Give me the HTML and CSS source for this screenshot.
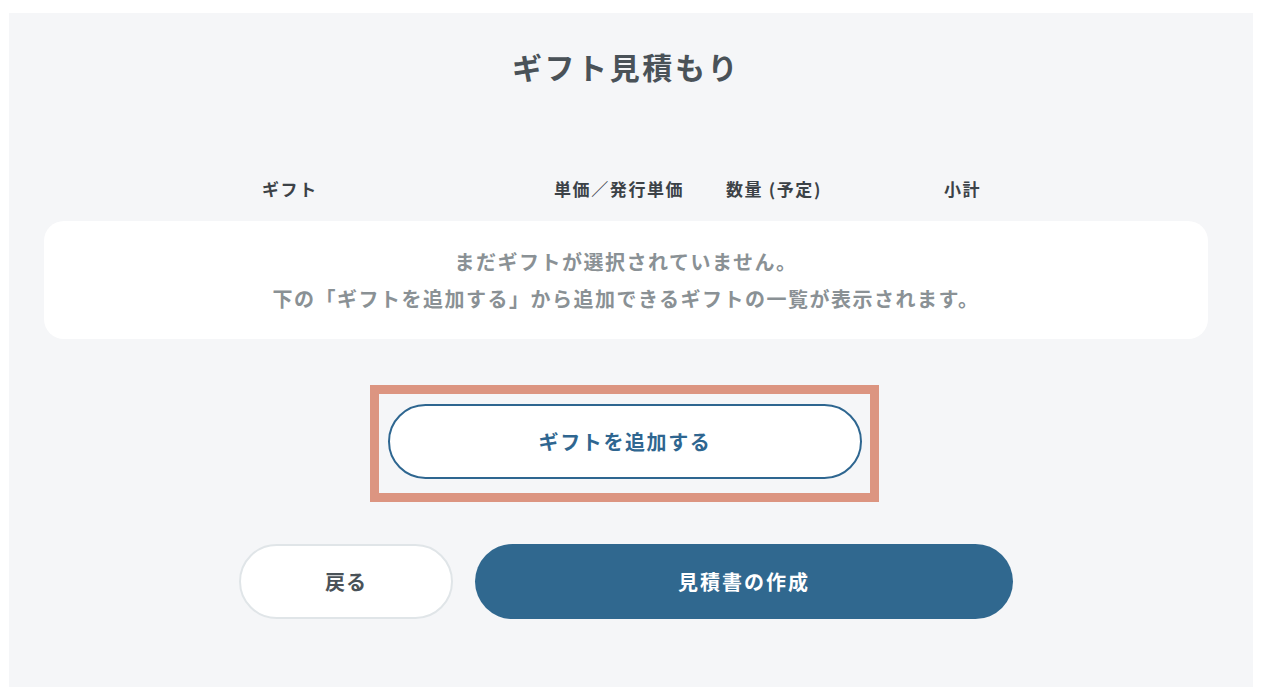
FILE: index.html
```html
<!DOCTYPE html>
<html lang="ja">
<head>
<meta charset="utf-8">
<title>ギフト見積もり</title>
<link rel="stylesheet" href="styles.css">
</head>
<body>
<main class="panel">
  <h1 class="title">ギフト見積もり</h1>
  <div class="table-head">
    <span>ギフト</span>
    <span>単価／発行単価</span>
    <span>数量 (予定)</span>
    <span>小計</span>
  </div>
  <div class="empty-card">
    <p>まだギフトが選択されていません。</p>
    <p>下の「ギフトを追加する」から追加できるギフトの一覧が表示されます。</p>
  </div>
  <div class="highlight">
    <button class="btn-add" type="button">ギフトを追加する</button>
  </div>
  <div class="actions">
    <button class="btn-back" type="button">戻る</button>
    <button class="btn-create" type="button">見積書の作成</button>
  </div>
</main>
</body>
</html>
```
FILE: styles.css
```css
* { box-sizing: border-box; }
html, body { margin: 0; padding: 0; background: #ffffff; }
body {
  font-family: "Noto Sans CJK JP", "Noto Sans", sans-serif;
  padding: 13px 15px 13px 9px;
}
.panel {
  width: 1244px;
  height: 674px;
  background: #f5f6f8;
  padding: 31px 45px 0 35px;
  display: flex;
  flex-direction: column;
}
.title {
  margin: 0;
  text-align: center;
  font-size: 30px;
  letter-spacing: 2.6px;
  line-height: 45px;
  font-weight: 700;
  color: #4a5258;
}
.table-head {
  margin-top: 88px;
  padding-left: 218px;
  display: grid;
  grid-template-columns: 292px 172px 218px auto;
  font-size: 17px;
  letter-spacing: 1.6px;
  line-height: 24px;
  font-weight: 700;
  color: #3c4247;
}
.empty-card {
  margin-top: 20px;
  background: #ffffff;
  border-radius: 20px;
  padding: 22px 0;
  text-align: center;
  color: #8a9195;
  font-size: 20px;
  letter-spacing: 1.5px;
  line-height: 37px;
  font-weight: 700;
}
.empty-card p { margin: 0; }
.highlight {
  align-self: center;
  margin-top: 46px;
  border: 9px solid #dc9581;
  padding: 10px 8px 14px 9px;
  margin-left: -3px;
}
.btn-add {
  display: block;
  width: 474px;
  height: 75px;
  border: 2px solid #2e6690;
  border-radius: 38px;
  background: #ffffff;
  color: #2f6690;
  font-family: inherit;
  font-size: 20px;
  letter-spacing: 1.6px;
  font-weight: 700;
}
.actions {
  margin-top: 42px;
  display: flex;
  justify-content: center;
  gap: 22px;
}
.btn-back {
  width: 214px;
  height: 75px;
  border: 2px solid #e0e5e8;
  border-radius: 38px;
  background: #ffffff;
  color: #4a5258;
  font-family: inherit;
  font-size: 20px;
  letter-spacing: 1px;
  font-weight: 700;
}
.btn-create {
  width: 538px;
  height: 75px;
  border: none;
  border-radius: 38px;
  background: #30688f;
  color: #ffffff;
  font-family: inherit;
  font-size: 20px;
  letter-spacing: 2px;
  font-weight: 700;
}
```
